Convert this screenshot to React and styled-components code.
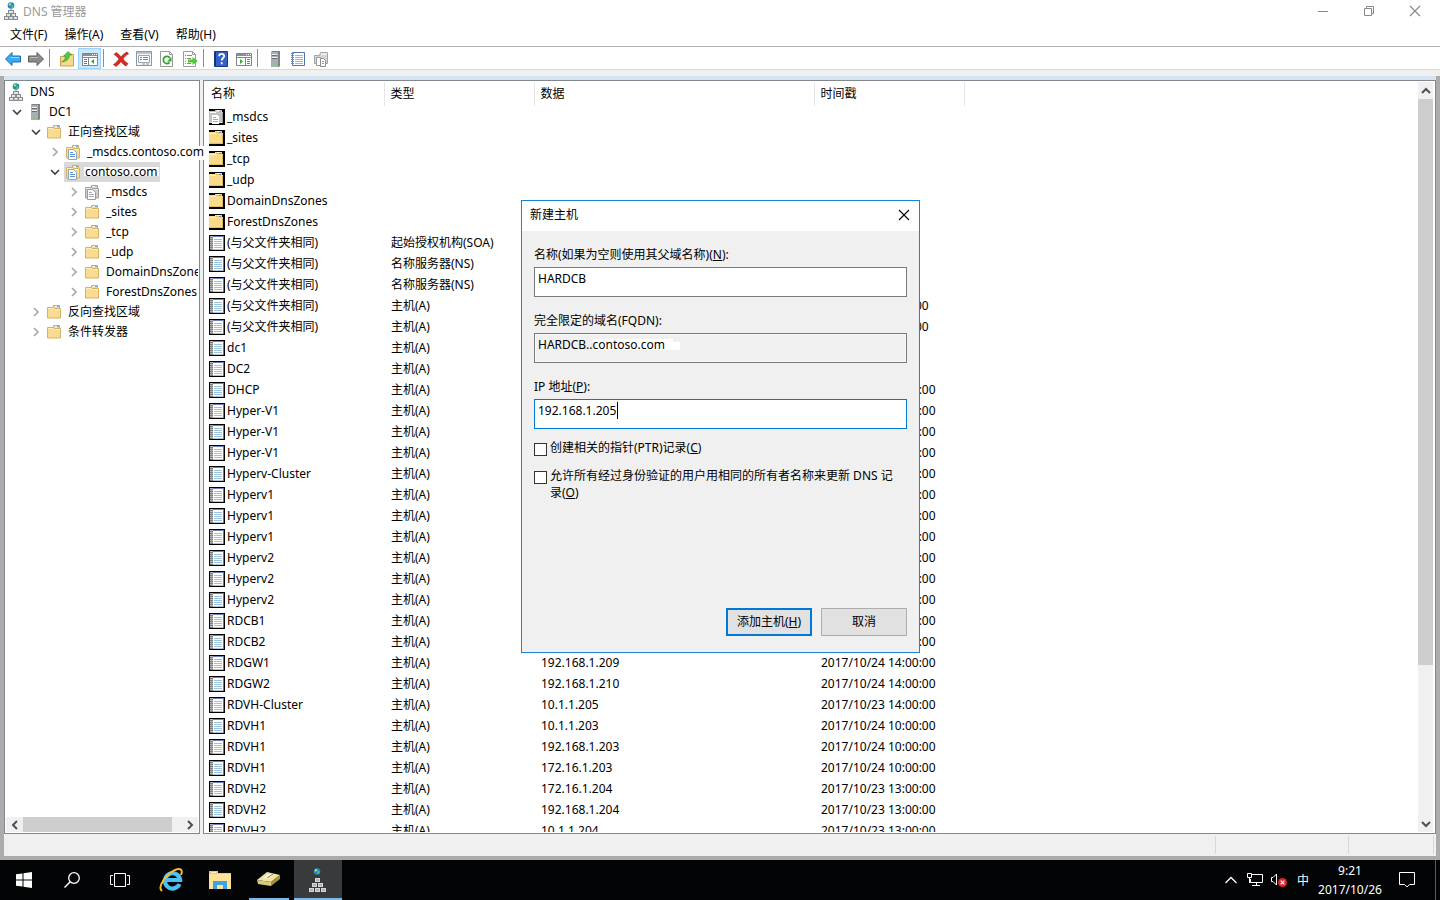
import React, { useState } from 'react';
import styled, { createGlobalStyle } from 'styled-components';

const GlobalStyle = createGlobalStyle`
    * {
        box-sizing: border-box;
    }
    body {
        margin: 0;
        overflow: hidden;
        background: #acacac;
    }
    body, button, input {
        font-family: "Noto Sans", "Noto Sans CJK SC", sans-serif;
        font-size: 12px;
        color: #000;
    }
    svg {
        display: block;
        flex: none;
    }
`

const Desktop = styled.div`
    position: relative;
    display: flex;
    flex-direction: column;
    height: 100vh;
`

const MainWindow = styled.main`
    flex: 1;
    min-height: 0;
    display: flex;
    flex-direction: column;
    background: #fff;
`

const TitleBar = styled.header`
    display: flex;
    align-items: center;
    height: 22px;
    padding: 0 2px 0 3px;
    color: #999;
`

const WindowTitle = styled.h1`
    flex: 1;
    margin: 0 0 0 4px;
    font-size: 12px;
    font-weight: normal;
`

const CaptionButton = styled.button`
    display: flex;
    align-items: center;
    justify-content: center;
    width: 46px;
    height: 20px;
    padding: 0;
    border: none;
    background: none;
`

const MenuBar = styled.nav`
    display: flex;
    gap: 17px;
    height: 24px;
    padding-left: 10px;
`

const MenuItem = styled.button`
    padding: 0;
    border: none;
    background: none;
    line-height: 26px;
`

const Toolbar = styled.div`
    display: flex;
    align-items: flex-end;
    height: 24px;
    padding-left: 1px;
    border-top: 1px solid #b0b0b0;
    border-bottom: 1px solid #dadada;
`

const ToolButton = styled.button`
    display: flex;
    align-items: center;
    justify-content: center;
    width: 23px;
    height: 21px;
    padding: 0;
    border: 1px solid ${({ $active }) => ($active ? '#99d1ff' : 'transparent')};
    background: ${({ $active }) => ($active ? '#cce8ff' : 'none')};
`

const ToolSeparator = styled.span`
    width: 1px;
    height: 18px;
    margin: 0 5px 2px 2px;
    background: #8c8c8c;
`

const Strip = styled.div`
    height: 6px;
    background: #f0f0f0;
`

const Frame = styled.div`
    flex: 1;
    min-height: 0;
    display: flex;
    flex-direction: column;
    padding: 0 4px 4px;
    background: #acacac;
`

const FrameTop = styled.div`
    height: 4px;
    background: #d6e3f1;
`

const Panes = styled.div`
    flex: 1;
    min-height: 0;
    display: flex;
    gap: 3px;
    background: #f0f0f0;
`

const Pane = styled.section`
    display: flex;
    min-height: 0;
    min-width: 0;
    border: 1px solid #828790;
    background: #fff;
`

const TreePane = styled(Pane)`
    flex: none;
    flex-direction: column;
    width: 196px;
    padding: 1px 0;
`

const ListPane = styled(Pane)`
    flex: 1;
    padding: 1px;
`

const TreeList = styled.ul`
    flex: 1;
    min-height: 0;
    margin: 0;
    padding: 0;
    list-style: none;
`

const TreeRow = styled.li`
    display: flex;
    align-items: center;
    height: 20px;
    padding-left: ${({ $level }) => ($level ? $level * 19 - 15 : 2)}px;
`

const Expander = styled.span`
    flex: none;
    width: 17px;
    padding-left: 3px;
`

const TreeItem = styled.span`
    display: flex;
    align-items: center;
    gap: 6px;
    flex: ${({ $selected }) => ($selected ? 'none' : '1')};
    min-width: 0;
    height: 20px;
    padding: 0 1px;
    background: ${({ $selected }) => ($selected ? '#d9d9d9' : 'none')};
`

const TreeLabel = styled.span`
    min-width: 0;
    overflow: ${({ $spill }) => ($spill ? 'visible' : 'hidden')};
    white-space: nowrap;
    line-height: 18px;
`

const DomainPatch = styled.span`
    position: relative;
    z-index: 1;
    padding-right: 1px;
    background: linear-gradient(#fff, #fff) 0 3px / 100% 14px no-repeat;
`

const SelectedPatch = styled.span`
    margin-left: -3px;
    padding: 0 1px;
    background: linear-gradient(#fff, #fff) 0 4px / 100% 9px no-repeat;
`

const ScrollBar = styled.div`
    flex: none;
    display: flex;
    flex-direction: ${({ $vertical }) => ($vertical ? 'column' : 'row')};
    width: ${({ $vertical }) => ($vertical ? '15px' : 'auto')};
    height: ${({ $vertical }) => ($vertical ? 'auto' : '15px')};
    margin-right: 1px;
    margin-left: 1px;
    background: #f0f0f0;
`

const ScrollButton = styled.button`
    display: flex;
    align-items: center;
    justify-content: center;
    width: 17px;
    height: 17px;
    max-width: 100%;
    max-height: 100%;
    padding: 0;
    border: none;
    background: none;
`

const ScrollTrack = styled.div`
    flex: 1;
    display: flex;
    flex-direction: inherit;
`

const ScrollThumb = styled.div`
    flex: 0 0 ${({ $size }) => $size};
    background: #cdcdcd;
`

const TableClip = styled.div`
    flex: 1;
    min-width: 0;
    overflow: hidden;
`

const Records = styled.table`
    width: 100%;
    table-layout: fixed;
    border-collapse: collapse;
    white-space: nowrap;

    th {
        height: 24px;
        padding: 0 0 2px 6px;
        border-right: 1px solid #e5e5e5;
        font-weight: normal;
        text-align: left;
    }
    th:last-child {
        border: none;
    }
    td {
        height: 21px;
        padding: 0 0 0 7px;
        line-height: 20px;
    }
    td:first-child {
        padding-left: 4px;
    }
`

const Col = styled.col`
    width: ${({ $width }) => $width}px;
`

const NameCell = styled.span`
    display: flex;
    align-items: center;
    gap: 2px;
`

const StatusBar = styled.footer`
    display: flex;
    justify-content: flex-end;
    height: 22px;
    padding: 2px 2px 2px 0;
    background: #f0f0f0;
`

const StatusCell = styled.span`
    width: ${({ $width }) => $width}px;
    border-left: 1px solid #d7d7d7;

    &:last-child {
        border-right: 1px solid #d7d7d7;
    }
`

const Dialog = styled.form`
    position: absolute;
    top: 200px;
    left: calc(50% - 199px);
    display: flex;
    flex-direction: column;
    width: 399px;
    height: 453px;
    border: 1px solid #1883d7;
    background: #f0f0f0;
`

const DialogTitle = styled.div`
    display: flex;
    justify-content: space-between;
    height: 30px;
    padding-left: 8px;
    line-height: 28px;
    background: #fff;
`

const CloseButton = styled.button`
    display: flex;
    align-items: center;
    justify-content: center;
    width: 30px;
    height: 28px;
    padding: 0;
    border: none;
    background: none;
`

const DialogBody = styled.div`
    flex: 1;
    display: flex;
    flex-direction: column;
    padding: 15px 12px 16px;
`

const Fields = styled.div`
    display: flex;
    flex-direction: column;
    gap: 15px;
    margin-bottom: 10px;
`

const Field = styled.label`
    display: block;
    line-height: 18px;
`

const TextInput = styled.input`
    display: block;
    width: 100%;
    height: 30px;
    margin-top: 3px;
    padding: 0 3px 7px;
    border: 1px solid #7a7a7a;
    border-radius: 0;
    outline: none;
    background: #fff;
`

const ReadOnlyInput = styled(TextInput)`
    box-shadow: inset 0 0 0 1px #fafafa;
    background:
        linear-gradient(#fff, #fff) 58px 5px / 80px 11px no-repeat,
        linear-gradient(#fff, #fff) 137px 8px / 8px 8px no-repeat,
        #f0f0f0;
`

const ActiveInput = styled(TextInput)`
    border-color: #0078d7;
    background: linear-gradient(#000, #000) 82px 2px / 1px 17px no-repeat, #fff;
`

const CheckLabel = styled.label`
    display: flex;
    align-items: flex-start;
    gap: 3px;
    margin-bottom: 11px;
    padding-right: 8px;
    line-height: 17px;
`

const CheckBox = styled.input`
    appearance: none;
    flex: none;
    width: 13px;
    height: 13px;
    margin: 4px 0 0;
    border: 1px solid #333;
    background: #fff;

    &:checked {
        box-shadow: inset 0 0 0 2px #fff;
        background: #333;
    }
`

const DialogActions = styled.div`
    display: flex;
    justify-content: flex-end;
    gap: 9px;
    margin-top: auto;
`

const DialogButton = styled.button`
    width: 86px;
    height: 28px;
    padding: 0 0 2px;
    border: ${({ $primary }) => ($primary ? '2px solid #0078d7' : '1px solid #adadad')};
    background: #e1e1e1;
`

const Taskbar = styled.nav`
    display: flex;
    align-items: stretch;
    height: 40px;
    background: #030405;
    color: #fff;
`

const TaskGroup = styled.div`
    display: flex;
    gap: ${({ $gap }) => $gap || 0}px;
    margin-right: 3px;
`

const TaskButton = styled.button`
    display: flex;
    align-items: center;
    justify-content: center;
    width: 48px;
    padding: 0;
    border: none;
    background:
        linear-gradient(#76b9ed, #76b9ed) 50% 100% / ${({ $line }) => $line || 0}px 2px no-repeat,
        ${({ $active }) => ($active ? '#393a3b' : 'transparent')};
`

const Tray = styled.div`
    display: flex;
    align-items: center;
    margin-left: auto;
`

const TrayButton = styled.button`
    display: flex;
    align-items: center;
    justify-content: center;
    width: ${({ $width }) => $width || 24}px;
    height: 40px;
    padding: 0;
    border: none;
    background: none;
    color: #fff;
`

const Clock = styled.time`
    width: 70px;
    line-height: 19px;
    text-align: center;
`

const ShowDesktop = styled.button`
    width: 5px;
    height: 40px;
    margin-left: 6px;
    padding: 0;
    border: none;
    border-left: 1px solid #5a5a5a;
    background: none;
`

const Globe = () => (
    <g>
        <circle cx="8" cy="3.500" r="3.300" fill="#2b7fd0" />
        <path d="M5.500 2l2-1.500 1.500 1-1 2-2 .8zM8.500 3.500l2.300-.5-.8 3-1.500.3z" fill="#4ad04a" />
        <circle cx="6.800" cy="2.300" r=".8" fill="#c8f0ff" />
    </g>
)

const DnsIcon = () => (
    <svg width="16" height="18" viewBox="0 0 16 18">
        <Globe />
        <path d="M8 7v2" stroke="#888" />
        <g fill="#e3e5e8" stroke="#878c93">
            <rect x="5.500" y="8.500" width="5" height="3" />
            <rect x="3.500" y="11.500" width="4" height="3" />
            <rect x="8.500" y="11.500" width="4" height="3" />
            <rect x="1.500" y="14.500" width="4" height="3" />
            <rect x="6" y="14.500" width="4" height="3" />
            <rect x="10.500" y="14.500" width="4" height="3" />
        </g>
    </svg>
)

const DnsTaskIcon = () => (
    <svg width="20" height="24" viewBox="0 0 20 24">
        <g transform="translate(1)">
            <Globe />
        </g>
        <g fill="#d3d6da">
            <path d="M7 10h5v4H7zM4 15h5v4H4zM10 15h5v4h-5zM1 20h5v4H1zM7 20h5v4H7zM13 20h5v4h-5z" />
        </g>
        <path d="M8 12h3M5 17h3M11 17h3M2 22h3M8 22h3M14 22h3" stroke="#8a8f97" />
    </svg>
)

const ServerIcon = () => (
    <svg width="16" height="16" viewBox="0 0 16 16">
        <path d="M4 1l1-1h8v15l-1 1H4z" fill="#7d8489" />
        <path d="M4 1h7v15H4z" fill="#a8aeb3" />
        <path d="M5 3.500h5M5 6.500h5" stroke="#f4f4f4" />
        <path d="M5 4.500h5M5 7.500h5" stroke="#666b70" />
        <path d="M9 13h2v2H9z" fill="#5be53a" />
    </svg>
)

const FolderShape = ({ gray }) => (
    <g>
        <path d="M7.500 1.500h6v3h-6z" fill={gray ? '#dcdcdc' : '#f6dc9c'} stroke={gray ? '#a5a5a5' : '#d3ab5c'} />
        <path d="M9 2.500h2" stroke="#fff" />
        <path d="M11 2.500h2" stroke={gray ? '#bbb' : '#6aa8e0'} />
        <path d="M1.500 3.500h6l1 1h6v9.500h-13z" fill={gray ? '#cdcdcd' : '#f9dc91'} stroke={gray ? '#a0a0a0' : '#d8b160'} />
        <path d="M2 4.500h5.500l1 1h5.500" stroke={gray ? '#e8e8e8' : '#fff0bd'} fill="none" />
    </g>
)

const PageShape = ({ gray }) => (
    <g>
        <path d="M3.500 5.500h5l3 3v7h-8z" fill="#fff" stroke={gray ? '#9a9a9a' : '#93a5ba'} />
        <path d="M5 8.500h3M5 10.500h5M5 12.500h5" stroke={gray ? '#aaa' : '#5a93cf'} />
    </g>
)

const FolderIcon = ({ gray, page }) => (
    <svg width="16" height="16" viewBox="0 0 16 16">
        <FolderShape gray={gray} />
        {page && <PageShape gray={gray} />}
    </svg>
)

const ListFolderIcon = ({ gray }) => (
    <svg width="16" height="16" viewBox="0 0 16 16" shapeRendering="crispEdges">
        <path d="M0 0h16v16H0z" fill="#000" />
        <path d="M0 2h6V1h7v2h1v11H0z" fill={gray ? '#c2c2c2' : '#fadb8a'} />
        <path d="M7 2.500h6M0 13.500h14" stroke={gray ? '#e0e0e0' : '#e2bc68'} />
        <path d="M8 1.500h3M1 3.500h6" stroke={gray ? '#fff' : '#fff0c4'} />
        <path d="M10 2.500h2" stroke={gray ? '#aaa' : '#4d94dd'} />
        <path d="M13.500 4v10" stroke={gray ? '#999' : '#dcb660'} />
        {gray && (
            <g>
                <path d="M3 6h5l2 2v7H3z" fill="#fff" />
                <path d="M4 8.500h3M4 10.500h5M4 12.500h5" stroke="#aaa" />
            </g>
        )}
    </svg>
)

const RecordIcon = () => (
    <svg width="16" height="16" viewBox="0 0 16 16" shapeRendering="crispEdges">
        <path d="M0 0h16v16H0z" fill="#000" />
        <path d="M1 1h14v14H1z" fill="#fff" />
        <path d="M3 1.500h12" stroke="#6c7fc0" />
        <path d="M14.500 2v13" stroke="#6f7796" />
        <path d="M4 14.500h10" stroke="#b9c4d2" />
        <path d="M5 4.500h8M5 6.500h8M5 8.500h8M5 10.500h8M5 12.500h8" stroke="#9cc3de" />
        <path d="M2.500 1v14" stroke="#b5b5b5" strokeWidth="3" />
        <path d="M1 2.500h3M1 4.500h3M1 6.500h3M1 8.500h3M1 10.500h3M1 12.500h3M1 14.500h3" stroke="#7c7c7c" />
    </svg>
)

const NotebookIcon = () => (
    <svg width="16" height="16" viewBox="0 0 16 16">
        <path d="M2.500 1.500h12v13h-12z" fill="#fff" stroke="#5373b0" />
        <path d="M5 4.500h8M5 6.500h8M5 8.500h8M5 10.500h8M5 12.500h8" stroke="#8bbbe2" />
        <path d="M1 2.500h3M1 4.500h3M1 6.500h3M1 8.500h3M1 10.500h3M1 12.500h3" stroke="#888" />
    </svg>
)

const ArrowIcon = ({ forward }) => (
    <svg width="16" height="16" viewBox="0 0 16 16">
        {forward
            ? <path d="M15.500 8L9 1.500V5H.5v6H9v3.500z" fill="#8b8b8b" stroke="#5c5c5c" />
            : <path d="M.5 8L7 1.500V5h8.500v6H7v3.500z" fill="#37aef2" stroke="#1b6eae" />}
        <path d={forward ? 'M2 6.500h8' : 'M6 6.500h8'} stroke={forward ? '#b9b9b9' : '#8fd8ff'} />
    </svg>
)

const UpFolderIcon = () => (
    <svg width="16" height="16" viewBox="0 0 16 16">
        <path d="M1.500 5.500h6l1-2h6v11.500h-13z" fill="#f7d98b" stroke="#c9a352" />
        <path d="M2.500 11c2.500-1 4-3.500 4-6H4.500L9 .5l4 3.500h-2.500c0 4-3.500 7-8 7z" fill="#52c93f" stroke="#348f2a" strokeWidth=".5" />
    </svg>
)

const ConsoleIcon = ({ right }) => (
    <svg width="16" height="16" viewBox="0 0 16 16">
        <path d="M.5 2.500h15v12H.5z" fill="#fff" stroke="#7a8590" />
        <path d="M1 4h14" stroke="#87919c" strokeWidth="2" />
        <path d="M10 3.500h1M12 3.500h1M14 3.500h1" stroke="#fff" />
        <path d={right ? 'M1 6.500h14M9.500 7v7' : 'M1 6.500h14M6.500 7v7'} stroke="#7a8590" />
        <path d={right ? 'M11 8.500h3M11 10.500h3M11 12.500h3' : 'M2 8.500h3M2 10.500h3M2 12.500h3'} stroke="#4d80bd" />
        <path d={right ? 'M4 8v5l3-2.500z' : 'M12 8v5L9 10.500z'} fill="#31b127" />
    </svg>
)

const DeleteIcon = () => (
    <svg width="16" height="16" viewBox="0 0 16 16">
        <path d="M3 1.500c2 1 3.500 2.500 5 4.500 1.500-2 3.500-4 6-5l1.500 2C13 4 11.500 5.500 10 8c1.500 2 3 3.500 5 4.500L13 15c-2-1-3.500-2.500-5-4.500-1.500 2-3 3.500-5 5L.5 13.500C3 12 4.500 10 6 8 4.500 6 3 4.500 1 3.500z" fill="#dc2a22" stroke="#a81712" strokeWidth=".6" />
    </svg>
)

const PropertiesIcon = () => (
    <svg width="16" height="16" viewBox="0 0 16 16">
        <path d="M.5.500h15v14H.5z" fill="#f7f8fa" stroke="#8b96a3" />
        <path d="M1 2h14" stroke="#b9c3cf" strokeWidth="2" />
        <path d="M2.500 4.500h11v7h-11z" fill="#fff" stroke="#9aa6b3" />
        <path d="M4 6.500h2M7 6.500h5M4 8.500h2M7 8.500h5" stroke="#6487b0" />
        <path d="M6 13h3M10 13h3" stroke="#8b96a3" />
    </svg>
)

const PageIcon = ({ children }) => (
    <svg width="16" height="16" viewBox="0 0 16 16">
        <path d="M1.500.500h9l3 3v12h-12z" fill="#fff" stroke="#9a9a9a" />
        <path d="M10.500.500v3h3" fill="none" stroke="#9a9a9a" />
        {children}
    </svg>
)

const HelpIcon = () => (
    <svg width="16" height="16" viewBox="0 0 16 16">
        <path d="M1.500.500h13v15h-13z" fill="#3560c4" stroke="#1d3a8a" />
        <path d="M2.500 1v14" stroke="#17307a" />
        <path d="M6.200 5.200c0-3 5-2.900 5-.2 0 2-2.500 2-2.500 4.500M8.700 11.300v2" fill="none" stroke="#fff" strokeWidth="1.800" />
    </svg>
)

const GrayCopyIcon = () => (
    <svg width="16" height="16" viewBox="0 0 16 16">
        <path d="M1.500 4.500h5l1-3h7v11h-13z" fill="#d6d6d6" stroke="#a5a5a5" />
        <path d="M8 3h6" stroke="#fff" />
        <path d="M3.500 6.500h4l2 2v6h-6z" fill="#fff" stroke="#999" />
        <path d="M7.500 7.500h3l2 2v6h-5z" fill="#fff" stroke="#8a8a8a" />
        <path d="M9 10.500h2M9 12.500h2" stroke="#999" />
    </svg>
)

const Chevron = ({ dir, color = '#505050', width = 1.6 }) => {
    const paths = {
        down: 'M1 3l4 4 4-4',
        up: 'M1 7l4-4 4 4',
        right: 'M3 1l4 4-4 4',
        left: 'M7 1L3 5l4 4',
    }
    return (
        <svg width="10" height="10" viewBox="0 0 10 10">
            <path d={paths[dir]} fill="none" stroke={color} strokeWidth={width} />
        </svg>
    )
}

const CloseGlyph = ({ color }) => (
    <svg width="12" height="12" viewBox="0 0 12 12">
        <path d="M1 1l10 10M11 1L1 11" stroke={color} strokeWidth="1.100" />
    </svg>
)

const IeIcon = () => (
    <svg width="26" height="26" viewBox="0 0 26 26">
        <path d="M21.500 17a7.600 7.600 0 1 1 .6-4H9" fill="none" stroke="#4cc0f3" strokeWidth="4.200" />
        <path d="M4 24C-1 20 8 7 17 3c6-2.500 8 0 6 5" fill="none" stroke="#f3bd32" strokeWidth="2" />
    </svg>
)

const ExplorerIcon = () => (
    <svg width="22" height="18" viewBox="0 0 22 18">
        <path d="M0 0h9v2h13v16H0z" fill="#f3c766" />
        <path d="M0 3h22v15H0z" fill="#ffe29a" />
        <path d="M2 1.500h5" stroke="#fff3cd" />
        <path d="M4 18v-8h14v8h-4v-4H8v4z" fill="#3ba4e3" />
    </svg>
)

const ManagerIcon = () => (
    <svg width="24" height="18" viewBox="0 0 24 18">
        <path d="M0 9L10 1l13 3-9 7z" fill="#efe5a0" />
        <path d="M0 9l14 2v4L1 13z" fill="#d9c97a" />
        <path d="M14 11l9-7v4l-9 7z" fill="#a5913f" />
        <path d="M6 7l5-4 5 1-5 4z" fill="#fffbe0" />
        <path d="M10 7l6-4" stroke="#877a35" />
    </svg>
)

const treeItems = [
    { level: 0, label: 'DNS', icon: <DnsIcon /> },
    { level: 1, label: 'DC1', icon: <ServerIcon />, open: true },
    { level: 2, label: '正向查找区域', icon: <FolderIcon />, open: true },
    { level: 3, label: '_msdcs.', domain: 'contoso.com', icon: <FolderIcon page />, open: false },
    { level: 3, label: 'contoso.com', icon: <FolderIcon page />, open: true, selected: true },
    { level: 4, label: '_msdcs', icon: <FolderIcon gray page />, open: false },
    { level: 4, label: '_sites', icon: <FolderIcon />, open: false },
    { level: 4, label: '_tcp', icon: <FolderIcon />, open: false },
    { level: 4, label: '_udp', icon: <FolderIcon />, open: false },
    { level: 4, label: 'DomainDnsZones', icon: <FolderIcon />, open: false },
    { level: 4, label: 'ForestDnsZones', icon: <FolderIcon />, open: false },
    { level: 2, label: '反向查找区域', icon: <FolderIcon />, open: false },
    { level: 2, label: '条件转发器', icon: <FolderIcon />, open: false },
]

const PARENT = '(与父文件夹相同)';
const HOST = '主机(A)';

const records = [
    ['_msdcs'],
    ['_sites'],
    ['_tcp'],
    ['_udp'],
    ['DomainDnsZones'],
    ['ForestDnsZones'],
    [PARENT, '起始授权机构(SOA)'],
    [PARENT, '名称服务器(NS)'],
    [PARENT, '名称服务器(NS)'],
    [PARENT, HOST, '', '2017/10/26 9:00:00'],
    [PARENT, HOST, '', '2017/10/26 9:00:00'],
    ['dc1', HOST],
    ['DC2', HOST],
    ['DHCP', HOST, '', '2017/10/24 14:00:00'],
    ['Hyper-V1', HOST, '', '2017/10/24 14:00:00'],
    ['Hyper-V1', HOST, '', '2017/10/24 14:00:00'],
    ['Hyper-V1', HOST, '', '2017/10/24 14:00:00'],
    ['Hyperv-Cluster', HOST, '', '2017/10/24 14:00:00'],
    ['Hyperv1', HOST, '', '2017/10/24 14:00:00'],
    ['Hyperv1', HOST, '', '2017/10/24 14:00:00'],
    ['Hyperv1', HOST, '', '2017/10/24 14:00:00'],
    ['Hyperv2', HOST, '', '2017/10/24 14:00:00'],
    ['Hyperv2', HOST, '', '2017/10/24 14:00:00'],
    ['Hyperv2', HOST, '', '2017/10/24 14:00:00'],
    ['RDCB1', HOST, '', '2017/10/24 14:00:00'],
    ['RDCB2', HOST, '', '2017/10/24 14:00:00'],
    ['RDGW1', HOST, '192.168.1.209', '2017/10/24 14:00:00'],
    ['RDGW2', HOST, '192.168.1.210', '2017/10/24 14:00:00'],
    ['RDVH-Cluster', HOST, '10.1.1.205', '2017/10/23 14:00:00'],
    ['RDVH1', HOST, '10.1.1.203', '2017/10/24 10:00:00'],
    ['RDVH1', HOST, '192.168.1.203', '2017/10/24 10:00:00'],
    ['RDVH1', HOST, '172.16.1.203', '2017/10/24 10:00:00'],
    ['RDVH2', HOST, '172.16.1.204', '2017/10/23 13:00:00'],
    ['RDVH2', HOST, '192.168.1.204', '2017/10/23 13:00:00'],
    ['RDVH2', HOST, '10.1.1.204', '2017/10/23 13:00:00'],
]

function Tree() {
    return (
        <TreePane>
            <TreeList>
                {treeItems.map((item, i) => (
                    <TreeRow key={i} $level={item.level}>
                        {item.level > 0 &&
                            <Expander>
                                <Chevron dir={item.open ? 'down' : 'right'} color={item.open ? '#404040' : '#a6a6a6'} />
                            </Expander>
                        }
                        <TreeItem $selected={item.selected}>
                            {item.icon}
                            <TreeLabel $spill={item.domain || item.selected}>
                                {item.selected ? <SelectedPatch>{item.label}</SelectedPatch> : item.label}
                                {item.domain && <DomainPatch>{item.domain}</DomainPatch>}
                            </TreeLabel>
                        </TreeItem>
                    </TreeRow>
                ))}
            </TreeList>
            <ScrollBar>
                <ScrollButton aria-label="向左滚动"><Chevron dir="left" width={2} /></ScrollButton>
                <ScrollTrack><ScrollThumb $size="94%" /></ScrollTrack>
                <ScrollButton aria-label="向右滚动"><Chevron dir="right" width={2} /></ScrollButton>
            </ScrollBar>
        </TreePane>
    )
}

function RecordList() {
    return (
        <ListPane>
            <TableClip>
                <Records>
                    <colgroup>
                        <Col $width={179} />
                        <Col $width={150} />
                        <Col $width={280} />
                        <Col $width={150} />
                        <col />
                    </colgroup>
                    <thead>
                        <tr>
                            <th>名称</th>
                            <th>类型</th>
                            <th>数据</th>
                            <th>时间戳</th>
                            <th></th>
                        </tr>
                    </thead>
                    <tbody>
                        {records.map(([name, type, data, stamp], i) => (
                            <tr key={i}>
                                <td>
                                    <NameCell>
                                        {type ? <RecordIcon /> : <ListFolderIcon gray={name === '_msdcs'} />}
                                        {name}
                                    </NameCell>
                                </td>
                                <td>{type}</td>
                                <td>{data}</td>
                                <td>{stamp}</td>
                                <td></td>
                            </tr>
                        ))}
                    </tbody>
                </Records>
            </TableClip>
            <ScrollBar $vertical>
                <ScrollButton aria-label="向上滚动"><Chevron dir="up" width={2} /></ScrollButton>
                <ScrollTrack><ScrollThumb $size="79%" /></ScrollTrack>
                <ScrollButton aria-label="向下滚动"><Chevron dir="down" width={2} /></ScrollButton>
            </ScrollBar>
        </ListPane>
    )
}

function NewHostDialog() {

    const [hostName, setHostName] = useState('HARDCB');
    const [address, setAddress] = useState('192.168.1.205');

    return (
        <Dialog role="dialog" aria-label="新建主机" onSubmit={(e) => e.preventDefault()}>
            <DialogTitle>
                新建主机
                <CloseButton type="button" aria-label="关闭"><CloseGlyph color="#000" /></CloseButton>
            </DialogTitle>
            <DialogBody>
                <Fields>
                    <Field>
                        名称(如果为空则使用其父域名称)(<u>N</u>):
                        <TextInput value={hostName} onChange={(e) => setHostName(e.target.value)} />
                    </Field>
                    <Field>
                        完全限定的域名(FQDN):
                        <ReadOnlyInput value={`${hostName}..contoso.com`} readOnly />
                    </Field>
                    <Field>
                        IP 地址(<u>P</u>):
                        <ActiveInput value={address} onChange={(e) => setAddress(e.target.value)} />
                    </Field>
                </Fields>
                <CheckLabel>
                    <CheckBox type="checkbox" />
                    <span>创建相关的指针(PTR)记录(<u>C</u>)</span>
                </CheckLabel>
                <CheckLabel>
                    <CheckBox type="checkbox" />
                    <span>允许所有经过身份验证的用户用相同的所有者名称来更新 DNS 记录(<u>O</u>)</span>
                </CheckLabel>
                <DialogActions>
                    <DialogButton type="submit" $primary>添加主机(<u>H</u>)</DialogButton>
                    <DialogButton type="button">取消</DialogButton>
                </DialogActions>
            </DialogBody>
        </Dialog>
    )
}

function WindowsTaskbar() {
    return (
        <Taskbar>
            <TaskGroup>
                <TaskButton aria-label="开始">
                    <svg width="16" height="16" viewBox="0 0 16 16">
                        <path d="M0 2.300l6.500-.9v6.100H0zM7.500 1.200L16 0v7.500H7.500zM0 8.500h6.500v6.100L0 13.700zM7.500 8.500H16V16l-8.500-1.200z" fill="#fff" />
                    </svg>
                </TaskButton>
                <TaskButton aria-label="搜索">
                    <svg width="16" height="16" viewBox="0 0 16 16">
                        <circle cx="10" cy="6" r="5.300" fill="none" stroke="#fff" strokeWidth="1.300" />
                        <path d="M6.200 9.800L.5 15.500" stroke="#fff" strokeWidth="1.500" />
                    </svg>
                </TaskButton>
                <TaskButton aria-label="任务视图">
                    <svg width="20" height="14" viewBox="0 0 20 14">
                        <path d="M4.500.500h11v13h-11zM3 2.500H.5v9H3M17 2.500h2.500v9H17" fill="none" stroke="#fff" />
                    </svg>
                </TaskButton>
            </TaskGroup>
            <TaskGroup $gap={1}>
                <TaskButton aria-label="Internet Explorer"><IeIcon /></TaskButton>
                <TaskButton aria-label="文件资源管理器"><ExplorerIcon /></TaskButton>
                <TaskButton aria-label="服务器管理器" $line={40}><ManagerIcon /></TaskButton>
                <TaskButton aria-label="DNS 管理器" $line={48} $active><DnsTaskIcon /></TaskButton>
            </TaskGroup>
            <Tray>
                <TrayButton aria-label="显示隐藏的图标">
                    <svg width="12" height="8" viewBox="0 0 12 8">
                        <path d="M.5 7L6 1.500 11.500 7" fill="none" stroke="#fff" strokeWidth="1.300" />
                    </svg>
                </TrayButton>
                <TrayButton aria-label="网络">
                    <svg width="16" height="14" viewBox="0 0 16 14">
                        <path d="M5 1.500h10.500v8H3.500V6M9.500 10v2.500M5 12.500h8" fill="none" stroke="#fff" />
                        <path d="M.5.500h4v4h-4zM2.500 5v5" fill="none" stroke="#fff" />
                    </svg>
                </TrayButton>
                <TrayButton aria-label="音量">
                    <svg width="16" height="14" viewBox="0 0 16 14">
                        <path d="M.5 4.500H2L5.500 1v11L2 8.500H.5z" fill="none" stroke="#fff" />
                        <circle cx="11.500" cy="9.500" r="4.500" fill="#e0242f" />
                        <path d="M9.700 7.700l3.600 3.600M13.300 7.700l-3.600 3.600" stroke="#fff" strokeWidth="1.200" />
                    </svg>
                </TrayButton>
                <TrayButton>中</TrayButton>
                <Clock>9:21<br />2017/10/26</Clock>
                <TrayButton aria-label="操作中心" $width={44}>
                    <svg width="16" height="16" viewBox="0 0 16 16">
                        <path d="M.5.500h15v12h-5L8 15l-2.500-2.500h-5z" fill="none" stroke="#fff" />
                    </svg>
                </TrayButton>
                <ShowDesktop aria-label="显示桌面" />
            </Tray>
        </Taskbar>
    )
}

function App() {
    return (
        <Desktop>
            <GlobalStyle />
            <MainWindow>
                <TitleBar>
                    <DnsIcon />
                    <WindowTitle>DNS 管理器</WindowTitle>
                    <CaptionButton aria-label="最小化">
                        <svg width="10" height="10"><path d="M0 5.500h10" stroke="#888" /></svg>
                    </CaptionButton>
                    <CaptionButton aria-label="还原">
                        <svg width="10" height="10" viewBox="0 0 10 10">
                            <path d="M.5 2.500h7v7h-7zM2.500 2.500v-2h7v7h-2" fill="none" stroke="#888" />
                        </svg>
                    </CaptionButton>
                    <CaptionButton aria-label="关闭"><CloseGlyph color="#888" /></CaptionButton>
                </TitleBar>
                <MenuBar>
                    <MenuItem>文件(F)</MenuItem>
                    <MenuItem>操作(A)</MenuItem>
                    <MenuItem>查看(V)</MenuItem>
                    <MenuItem>帮助(H)</MenuItem>
                </MenuBar>
                <Toolbar>
                    <ToolButton aria-label="后退"><ArrowIcon /></ToolButton>
                    <ToolButton aria-label="前进"><ArrowIcon forward /></ToolButton>
                    <ToolSeparator />
                    <ToolButton aria-label="上一级"><UpFolderIcon /></ToolButton>
                    <ToolButton aria-label="显示控制台树" $active><ConsoleIcon /></ToolButton>
                    <ToolSeparator />
                    <ToolButton aria-label="删除"><DeleteIcon /></ToolButton>
                    <ToolButton aria-label="属性"><PropertiesIcon /></ToolButton>
                    <ToolButton aria-label="刷新">
                        <PageIcon>
                            <path d="M10.500 11.500A3.600 3.600 0 1 1 11 7" fill="none" stroke="#2fa82c" strokeWidth="1.800" />
                            <path d="M12.500 6v4.500H8z" fill="#2fa82c" />
                        </PageIcon>
                    </ToolButton>
                    <ToolButton aria-label="导出列表">
                        <PageIcon>
                            <path d="M3 4.500h1M5 4.500h5M3 7.500h1M5 7.500h4M3 10.500h1M3 12.500h1M5 12.500h4" stroke="#9c8a4a" />
                            <path d="M6 8.500h4.500V6L16 10l-5.500 4v-2.500H6z" fill="#4fc83a" />
                        </PageIcon>
                    </ToolButton>
                    <ToolSeparator />
                    <ToolButton aria-label="帮助"><HelpIcon /></ToolButton>
                    <ToolButton aria-label="显示操作窗格"><ConsoleIcon right /></ToolButton>
                    <ToolSeparator />
                    <ToolButton aria-label="新建服务器"><ServerIcon /></ToolButton>
                    <ToolButton aria-label="新建记录"><NotebookIcon /></ToolButton>
                    <ToolButton aria-label="新建区域"><GrayCopyIcon /></ToolButton>
                </Toolbar>
                <Strip />
                <Frame>
                    <FrameTop />
                    <Panes>
                        <Tree />
                        <RecordList />
                    </Panes>
                    <StatusBar>
                        <StatusCell $width={133} />
                        <StatusCell $width={86} />
                    </StatusBar>
                </Frame>
            </MainWindow>
            <NewHostDialog />
            <WindowsTaskbar />
        </Desktop>
    )
}

export default App;
